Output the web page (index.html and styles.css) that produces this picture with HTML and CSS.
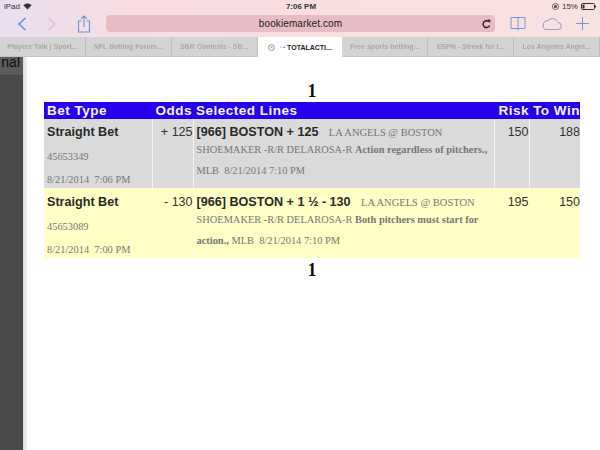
FILE: index.html
```html
<!DOCTYPE html>
<html lang="en">
<head>
<meta charset="utf-8">
<title>bookiemarket.com</title>
<link rel="stylesheet" href="styles.css">
</head>
<body>
<header class="chrome">
  <div class="status">
    <div class="status-left">
      <span>iPad</span>
      <svg class="wifi" width="9" height="7" viewBox="0 0 9 7"><path d="M4.5 6.6 0.4 2.2C2.6 0 6.4 0 8.6 2.2Z" fill="#333"/></svg>
    </div>
    <div class="status-time">7:06 PM</div>
    <div class="status-right">
      <svg width="7" height="7" viewBox="0 0 7 7"><circle cx="3.5" cy="3.5" r="3" fill="none" stroke="#444" stroke-width=".8"/><circle cx="3.5" cy="3.5" r="1.5" fill="#444"/></svg>
      <span>15%</span>
      <svg width="15" height="7" viewBox="0 0 15 7"><rect x=".5" y=".5" width="13" height="6" rx="1" fill="none" stroke="#333"/><rect x="1.5" y="1.5" width="2" height="4" fill="#333"/><rect x="14" y="2.5" width="1" height="2" fill="#333"/></svg>
    </div>
  </div>
  <div class="toolbar">
    <div class="nav-icons">
      <svg width="10" height="14" viewBox="0 0 10 14"><path d="M8.5 1 2 7l6.500 6" fill="none" stroke="#5f8fd8" stroke-width="1.500"/></svg>
      <svg width="10" height="14" viewBox="0 0 10 14"><path d="M1.500 1 8 7l-6.500 6" fill="none" stroke="#c9c3d0" stroke-width="1.300"/></svg>
      <svg width="14" height="18" viewBox="0 0 14 18"><path d="M4.500 6H1.500v11h11V6H9.500M7 12V1M4 3.700 7 1l3 2.700" fill="none" stroke="#6b96d8" stroke-width="1.100"/></svg>
    </div>
    <div class="address">
      <span class="url">bookiemarket.com</span>
      <svg class="reload" width="9" height="10" viewBox="0 0 9 10"><path d="M7.600 6.500A3.400 3.400 0 1 1 6.800 2.600" fill="none" stroke="#222" stroke-width="1.400"/><path d="M5.500 .5 8.500 .8 8 4Z" fill="#222"/></svg>
    </div>
    <div class="tool-icons">
      <svg width="16" height="15" viewBox="0 0 16 15"><path d="M8 1.500H1v11h7m0-11h7v11H8m0-11v13" fill="none" stroke="#6b9bdc" stroke-width="1"/></svg>
      <svg width="22" height="13" viewBox="0 0 22 13"><path d="M5 12.500H17.500a3.500 3.500 0 0 0 .5-7A6 6 0 0 0 8 3.500 5 5 0 0 0 5 12.500Z" fill="none" stroke="#7ba2dc" stroke-width="1"/></svg>
      <svg width="13" height="13" viewBox="0 0 13 13"><path d="M6.500 0v13M0 6.500h13" stroke="#6b9bdc" stroke-width="1"/></svg>
    </div>
  </div>
  <nav class="tabs">
    <div class="tab">Players Talk | Sport...</div>
    <div class="tab">NFL Betting Forum...</div>
    <div class="tab">SBR Contests - SB...</div>
    <div class="tab tab-active"><span class="tab-close">×</span><span class="tab-dots">▫ •</span> TOTALACTI...</div>
    <div class="tab">Free sports betting...</div>
    <div class="tab">ESPN - Streak for t...</div>
    <div class="tab">Los Angeles Angel...</div>
  </nav>
</header>
<main class="viewport">
  <aside class="side">
    <div class="side-band"><span class="side-text">nal</span></div>
  </aside>
  <section class="content">
    <div class="page-num page-top">1</div>
    <table class="bets">
      <colgroup>
        <col class="col-type"><col class="col-odds"><col class="col-lines"><col class="col-risk"><col class="col-win">
      </colgroup>
      <thead>
        <tr><th>Bet Type</th><th>Odds</th><th>Selected Lines</th><th>Risk</th><th>To Win</th></tr>
      </thead>
      <tbody>
        <tr class="row-gray">
          <td><b class="big">Straight Bet</b><p class="meta">45653349</p><p class="meta">8/21/2014 &nbsp;7:06 PM</p></td>
          <td class="num">+ 125</td>
          <td><b class="big">[966] BOSTON + 125</b> &nbsp;&nbsp;<span class="serif">LA ANGELS @ BOSTON</span>
            <p class="detail">SHOEMAKER -R/R DELAROSA-R <b>Action regardless of pitchers.,</b></p>
            <p class="detail">MLB &nbsp;8/21/2014 7:10 PM</p></td>
          <td class="num">150</td>
          <td class="num">188</td>
        </tr>
        <tr class="row-yellow">
          <td><b class="big">Straight Bet</b><p class="meta">45653089</p><p class="meta">8/21/2014 &nbsp;7:00 PM</p></td>
          <td class="num">- 130</td>
          <td><b class="big">[966] BOSTON + 1 ½ - 130</b> &nbsp;&nbsp;<span class="serif">LA ANGELS @ BOSTON</span>
            <p class="detail">SHOEMAKER -R/R DELAROSA-R <b>Both pitchers must start for</b></p>
            <p class="detail"><b>action.,</b> MLB &nbsp;8/21/2014 7:10 PM</p></td>
          <td class="num">195</td>
          <td class="num">150</td>
        </tr>
      </tbody>
    </table>
    <div class="page-num page-bottom">1</div>
  </section>
</main>
</body>
</html>
```
FILE: styles.css
```css
* { box-sizing: border-box; }
html, body { margin: 0; padding: 0; }
body {
  width: 600px;
  height: 450px;
  overflow: hidden;
  background: #fff;
  font-family: "Liberation Sans", Arial, sans-serif;
  display: flex;
  flex-direction: column;
}
.chrome {
  background: linear-gradient(90deg, #e9def0 0%, #f9dde2 22%, #f9dfe0 60%, #f8e2e0 100%);
}
.status {
  height: 13px;
  display: flex;
  align-items: center;
  justify-content: space-between;
  padding: 0 4px;
  font-size: 8px;
  color: #333;
}
.status-left, .status-right { display: flex; align-items: center; gap: 3px; }
.status-time { font-weight: bold; margin-left: 18px; }
.toolbar {
  height: 24px;
  display: flex;
  align-items: center;
  padding-bottom: 3px;
}
.nav-icons {
  width: 106px;
  display: flex;
  align-items: center;
  padding-left: 17px;
  gap: 20px;
}
.address {
  width: 389px;
  height: 17px;
  background: #e8bcc5;
  border-radius: 4px;
  display: flex;
  align-items: center;
  position: relative;
  justify-content: center;
}
.url { font-size: 10px; color: #222; letter-spacing: .1px; }
.reload { position: absolute; right: 4px; top: 4px; }
.tool-icons {
  flex: 1;
  display: flex;
  align-items: center;
  padding-left: 15px;
  gap: 14px;
}
.tabs { height: 20px; display: flex; background: #d3d3d3; }
.tab {
  flex: 1;
  border-right: 1px solid #bdbdbd;
  font-size: 7px;
  font-weight: bold;
  color: #a8a8a8;
  display: flex;
  align-items: center;
  justify-content: center;
  white-space: nowrap;
  overflow: hidden;
  filter: blur(.4px);
  border-bottom: 1px solid #c4c4c4;
}
.tab-active { background: #fff; color: #222; border-right: none; border-bottom: none; filter: none; gap: 2px; }
.tab-close {
  width: 7px; height: 7px; border: 1px solid #999; border-radius: 50%;
  font-size: 6px; line-height: 5px; text-align: center; color: #888; font-weight: normal;
  margin-right: 3px;
}
.tab-dots { color: #666; font-size: 5px; }
.viewport { flex: 1; display: flex; min-height: 0; }
.side {
  width: 27px;
  background: linear-gradient(90deg, #4a4a4a 0, #4a4a4a 23px, #d8d8d8 23px, #f2f2f2 26px, #e2e2e2 27px);
  font-size: 14px;
  color: #111;
}
.side-band {
  width: 23px;
  height: 19px;
  background: #5c5c5c;
  border-bottom: 1px solid #444;
}
.side-text { display: block; line-height: 10px; text-align: right; padding-right: 3px; }
.content { flex: 1; padding: 24px 20px 0 17px; min-width: 0; }
.page-num {
  font-family: "Liberation Serif", "Times New Roman", serif;
  font-weight: bold;
  font-size: 18px;
  line-height: 21px;
  text-align: center;
  color: #111;
}
.page-bottom { margin-top: 2px; }
.bets {
  width: 536px;
  table-layout: fixed;
  border-collapse: collapse;
}
.col-type { width: 108px; }
.col-odds { width: 41px; }
.col-lines { width: 301px; }
.col-risk { width: 35px; }
.col-win { width: 51px; }
.bets th {
  background: #2400ee;
  color: #f4f4ff;
  font-size: 13.500px;
  line-height: 17px;
  height: 17px;
  padding: 0 3px;
  text-align: left;
  white-space: nowrap;
  letter-spacing: .5px;
}
.bets th:nth-child(2) { text-align: right; padding: 0 1px 0 0; }
.bets th:nth-child(4), .bets th:nth-child(5) { text-align: right; padding: 0; }
.bets td {
  vertical-align: top;
  padding: 6px 3px 0;
  height: 69px;
  font-size: 12.500px;
  color: #333;
  border-left: 1px solid #f4f4f4;
}
.bets td:first-child { border-left: none; }
.row-gray td { background: #dadada; }
.bets .row-yellow td { background: #ffffc6; border-left-color: #fbfbd8; height: 70px; padding-top: 7px; }
.num { text-align: right; line-height: 15px; }
.bets td.num { padding-right: 0; }
.big { font-size: 12.600px; line-height: 15px; color: #2a2a2a; }
.serif, .meta, .detail {
  font-family: "Liberation Serif", "Times New Roman", serif;
  color: #777;
}
.serif { font-size: 10.500px; }
.meta { margin: 10px 0 0; font-size: 10.400px; line-height: 13px; }
.detail { margin: 0; font-size: 10.400px; line-height: 21px; white-space: nowrap; }
.detail:first-of-type { margin-top: -1px; }
```
